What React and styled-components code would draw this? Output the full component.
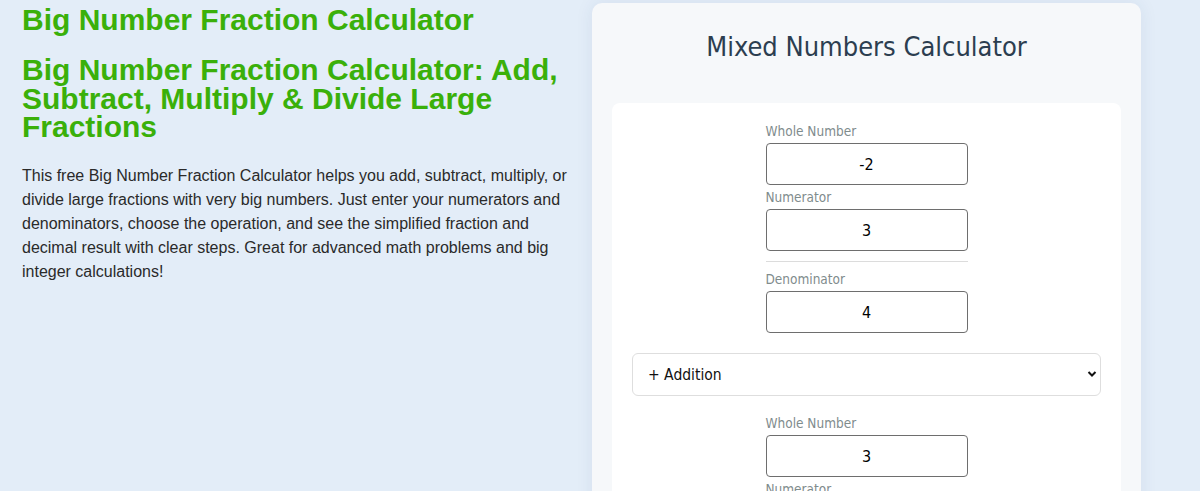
import React from "react"
import styled, { createGlobalStyle } from "styled-components"

const GlobalStyle = createGlobalStyle`
  html, body {
    margin: 0;
    padding: 0;
    background: #e3edf8;
  }
  body {
    font-family: "Liberation Sans", Arial, sans-serif;
  }
`

const Page = styled.div`
  display: grid;
  grid-template-columns: 548px 549px;
  column-gap: 22px;
  padding: 3px 0 0 22px;
  align-items: start;
`

const Intro = styled.section`
  display: flex;
  flex-direction: column;
`

const Title = styled.h1`
  margin: 0;
  padding-top: 2px;
  font-size: 30px;
  line-height: 30px;
  font-weight: bold;
  color: #3ab00a;
`

const Subtitle = styled.h2`
  margin: 21px 0 0;
  font-size: 30px;
  line-height: 28.5px;
  font-weight: bold;
  color: #3ab00a;
`

const Lead = styled.p`
  margin: 22px 0 0;
  font-size: 16px;
  line-height: 24px;
  color: #2a2a2a;
`

const Card = styled.section`
  background: #f6f8fa;
  border-radius: 10px;
  box-shadow: 0 0 18px rgba(40, 70, 110, 0.08);
  padding: 20px 20px 0;
  height: 520px;
  font-family: "DejaVu Sans Condensed", "DejaVu Sans", Verdana, sans-serif;
`

const CardTitle = styled.h2`
  margin: 9px 0 41px;
  text-align: center;
  font-weight: normal;
  font-size: 27px;
  line-height: 30px;
  color: #2c3e50;
`

const Panel = styled.div`
  background: #ffffff;
  border-radius: 8px;
  padding: 18px 20px;
  display: flex;
  flex-direction: column;
  align-items: center;
  height: 400px;
`

const Fraction = styled.div`
  display: flex;
  flex-direction: column;
  gap: 2px;
  width: 202px;
`

const Field = styled.label`
  display: flex;
  flex-direction: column;
  gap: 2px;
`

const FieldLabel = styled.span`
  font-size: 13.5px;
  line-height: 20px;
  color: #7f8c8d;
`

const NumberInput = styled.input`
  box-sizing: border-box;
  width: 202px;
  height: 42px;
  border: 1px solid #6e6e6e;
  border-radius: 4px;
  background: #fff;
  text-align: center;
  font-family: inherit;
  font-size: 16px;
  color: #000;
  outline: none;
`

const Divider = styled.hr`
  width: 100%;
  border: none;
  border-top: 1px solid #dcdcdc;
  margin: 8px 0 5px;
`

const SelectWrap = styled.div`
  position: relative;
  align-self: stretch;
  margin: 20px 0 17px;
`

const OperationSelect = styled.select`
  appearance: none;
  box-sizing: border-box;
  width: 100%;
  height: 43px;
  padding: 0 15px;
  border: 1px solid #dedede;
  border-radius: 6px;
  background: #fff;
  font-family: inherit;
  font-size: 15.5px;
  color: #111;
`

const Chevron = styled.svg`
  position: absolute;
  right: 4px;
  top: 17px;
  pointer-events: none;
`

const NumberField = ({ label, value }) => (
  <Field>
    <FieldLabel>{label}</FieldLabel>
    <NumberInput type="text" defaultValue={value} />
  </Field>
)

const MixedNumber = ({ whole, numerator, denominator }) => (
  <Fraction>
    <NumberField label="Whole Number" value={whole} />
    <NumberField label="Numerator" value={numerator} />
    <Divider />
    <NumberField label="Denominator" value={denominator} />
  </Fraction>
)

const App = () => (
  <>
    <GlobalStyle />
    <Page>
      <Intro>
        <Title>Big Number Fraction Calculator</Title>
        <Subtitle>
          Big Number Fraction Calculator: Add, Subtract, Multiply &amp; Divide Large Fractions
        </Subtitle>
        <Lead>
          This free Big Number Fraction Calculator helps you add, subtract, multiply, or divide
          large fractions with very big numbers. Just enter your numerators and denominators,
          choose the operation, and see the simplified fraction and decimal result with clear
          steps. Great for advanced math problems and big integer calculations!
        </Lead>
      </Intro>
      <Card>
        <CardTitle>Mixed Numbers Calculator</CardTitle>
        <Panel>
          <MixedNumber whole="-2" numerator="3" denominator="4" />
          <SelectWrap>
            <OperationSelect defaultValue="add">
              <option value="add">+ Addition</option>
              <option value="sub">− Subtraction</option>
              <option value="mul">× Multiplication</option>
              <option value="div">÷ Division</option>
            </OperationSelect>
            <Chevron width="10" height="8" viewBox="0 0 10 8">
              <path d="M1.5 2 L5 5.5 L8.5 2" fill="none" stroke="#111" strokeWidth="2" />
            </Chevron>
          </SelectWrap>
          <MixedNumber whole="3" numerator="" denominator="" />
        </Panel>
      </Card>
    </Page>
  </>
)

export default App
